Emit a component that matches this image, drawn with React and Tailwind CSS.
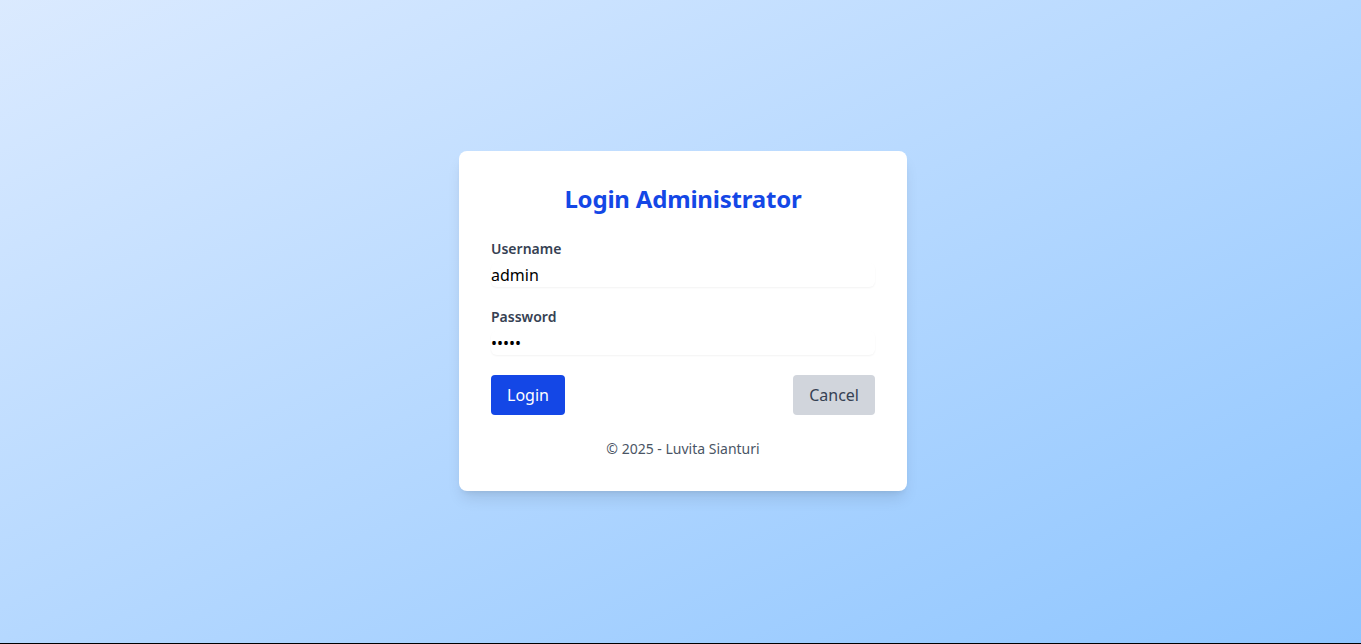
import React, { useState } from 'react'

const App = () => {
    const [username, setUsername] = useState("admin")
    const [password, setPassword] = useState("admin")

    return (
        <div className="bg-black min-h-screen" style={{ fontFamily: '"Noto Sans", "Open Sans", sans-serif' }}>
            <div className="h-[643px] flex items-center justify-center bg-gradient-to-br from-blue-100 to-blue-300 pl-[5px] pb-[2px]">
                <div className="bg-white w-[448px] rounded-lg shadow-lg p-8">
                    <h1 className="text-2xl font-bold text-blue-700 text-center mb-6 tracking-[-0.2px]">Login Administrator</h1>

                    <div className="mb-5">
                        <label className="block text-sm font-semibold text-gray-700 mb-1">Username</label>
                        <input
                            type="text"
                            value={username}
                            onChange={(e) => setUsername(e.target.value)}
                            className="w-full text-base text-black rounded-md shadow-xs outline-none"
                        />
                    </div>

                    <div className="mb-5">
                        <label className="block text-sm font-semibold text-gray-700 mb-1">Password</label>
                        <input
                            type="password"
                            value={password}
                            onChange={(e) => setPassword(e.target.value)}
                            className="w-full text-base text-black rounded-md shadow-xs outline-none"
                        />
                    </div>

                    <div className="flex justify-between items-center">
                        <button className="bg-blue-700 text-white px-4 py-2 rounded">Login</button>
                        <button className="bg-gray-300 text-gray-700 px-4 py-2 rounded">Cancel</button>
                    </div>

                    <p className="text-sm text-gray-600 text-center mt-6">© 2025 - Luvita Sianturi</p>
                </div>
            </div>
        </div>
    );
};

export default App;
